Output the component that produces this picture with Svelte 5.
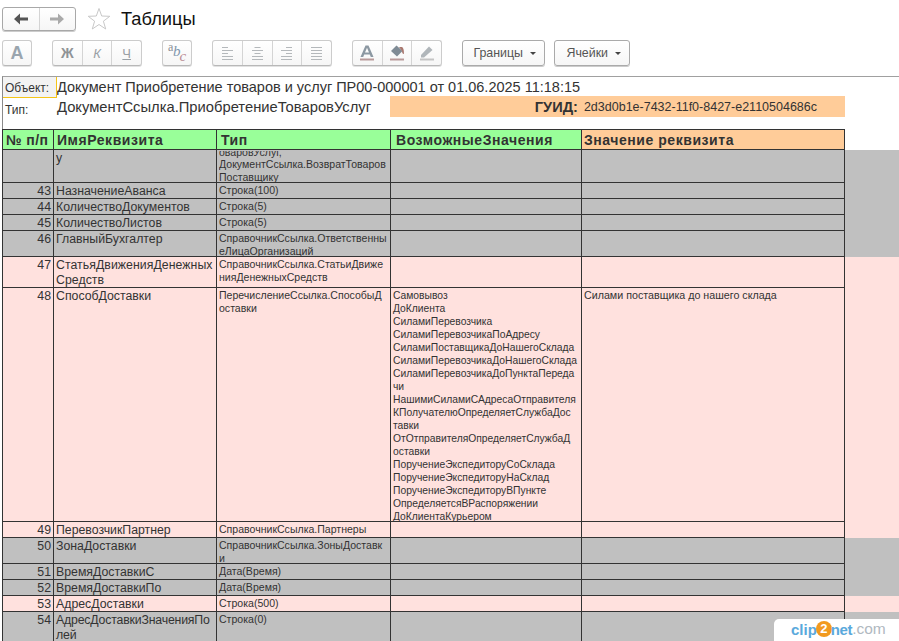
<script>
  const rows = [
    { n: '', name: ['у'], type: ['оваровУслуг,', 'ДокументСсылка.ВозвратТоваров', 'Поставщику'], c: 'gray first' },
    { n: 43, name: ['НазначениеАванса'], type: ['Строка(100)'], c: 'gray' },
    { n: 44, name: ['КоличествоДокументов'], type: ['Строка(5)'], c: 'gray' },
    { n: 45, name: ['КоличествоЛистов'], type: ['Строка(5)'], c: 'gray' },
    { n: 46, name: ['ГлавныйБухгалтер'], type: ['СправочникСсылка.Ответственны', 'еЛицаОрганизаций'], c: 'gray' },
    { n: 47, name: ['СтатьяДвиженияДенежных', 'Средств'], type: ['СправочникСсылка.СтатьиДвиже', 'нияДенежныхСредств'], c: 'pink wide' },
    { n: 48, name: ['СпособДоставки'], type: ['ПеречислениеСсылка.СпособыД', 'оставки'], c: 'pink',
      vals: ['Самовывоз', 'ДоКлиента', 'СиламиПеревозчика', 'СиламиПеревозчикаПоАдресу', 'СиламиПоставщикаДоНашегоСклада', 'СиламиПеревозчикаДоНашегоСклада', 'СиламиПеревозчикаДоПунктаПереда', 'чи', 'НашимиСиламиСАдресаОтправителя', 'КПолучателюОпределяетСлужбаДос', 'тавки', 'ОтОтправителяОпределяетСлужбаД', 'оставки', 'ПоручениеЭкспедиторуСоСклада', 'ПоручениеЭкспедиторуНаСклад', 'ПоручениеЭкспедиторуВПункте', 'ОпределяетсяВРаспоряжении', 'ДоКлиентаКурьером'],
      value: 'Силами поставщика до нашего склада' },
    { n: 49, name: ['ПеревозчикПартнер'], type: ['СправочникСсылка.Партнеры'], c: 'pink' },
    { n: 50, name: ['ЗонаДоставки'], type: ['СправочникСсылка.ЗоныДоставк', 'и'], c: 'gray' },
    { n: 51, name: ['ВремяДоставкиС'], type: ['Дата(Время)'], c: 'gray' },
    { n: 52, name: ['ВремяДоставкиПо'], type: ['Дата(Время)'], c: 'gray' },
    { n: 53, name: ['АдресДоставки'], type: ['Строка(500)'], c: 'pink' },
    { n: 54, name: ['АдресДоставкиЗначенияПо', 'лей'], type: ['Строка(0)'], c: 'gray tight' }
  ];
  const aligns = [
    ['M0 .5H6', 'M0 3.5H11', 'M0 6.5H6', 'M0 9.5H11', 'M0 12.5H11'],
    ['M2.5 .5H8.5', 'M0 3.5H11', 'M2.5 6.5H8.5', 'M0 9.5H11', 'M0 12.5H11'],
    ['M5 .5H11', 'M0 3.5H11', 'M5 6.5H11', 'M0 9.5H11', 'M0 12.5H11'],
    ['M0 .5H11', 'M0 3.5H11', 'M0 6.5H11', 'M0 9.5H11', 'M0 12.5H11']
  ];
</script>

<div class="page">
  <header class="top">
    <div class="group nav">
      <button class="btn"><svg width="14" height="12" viewBox="0 0 14 12"><path d="M6 .5 L0 6 L6 11.5 V7.5 H14 V4.5 H6 Z" fill="#555"/></svg></button>
      <button class="btn"><svg width="14" height="12" viewBox="0 0 14 12"><path d="M8 .5 L14 6 L8 11.5 V7.5 H0 V4.5 H8 Z" fill="#aaa"/></svg></button>
    </div>
    <svg class="star" width="24" height="24" viewBox="0 0 24 24"><path d="M12 1.5 L14.7 9 L22.8 9.3 L16.4 14.2 L18.7 22 L12 17.5 L5.3 22 L7.6 14.2 L1.2 9.3 L9.3 9 Z" fill="#fff" stroke="#c8c8c8"/></svg>
    <h1>Таблицы</h1>
  </header>

  <div class="toolbar">
    <div class="group w1"><button class="btn"><span class="a">A</span></button></div>
    <div class="group w3">
      <button class="btn"><span class="gl zh">Ж</span></button>
      <button class="btn"><span class="gl k">К</span></button>
      <button class="btn"><span class="gl ch">Ч</span></button>
    </div>
    <div class="group w1">
      <button class="btn">
        <svg width="20" height="20" viewBox="0 0 20 20">
          <text x="1" y="8" class="abc" fill="#8a8f94">a</text>
          <text x="6" y="13" class="abc big" fill="#7f97ad">b</text>
          <text x="12.5" y="18" class="abc big" fill="#b98d94">c</text>
        </svg>
      </button>
    </div>
    <div class="group w4">
      {#each aligns as a}
        <button class="btn">
          <svg width="11" height="13" viewBox="0 0 11 13" stroke="#b4b8bb" fill="none">
            {#each a as d}<path {d} />{/each}
          </svg>
        </button>
      {/each}
    </div>
    <div class="group w3">
      <button class="btn"><svg width="18" height="18" viewBox="0 0 18 18"><path d="M2.5 13 L7.5 1.5 H10.5 L15.5 13 H12.8 L11.8 10.5 H6.2 L5.2 13 Z M7 8.5 H11 L9 3.8 Z" fill="#8c98a2" fill-rule="evenodd"/><path d="M2 15.5H16" stroke="#b89a9a" stroke-width="2"/></svg></button>
      <button class="btn">
        <svg width="18" height="18" viewBox="0 0 18 18"><path d="M8.5 1.5 L14.5 7 L9 12.5 L3 7 Z" fill="#7f8b95"/><path d="M11 3 h3 q2 1 2 7 q-2 0 -2-3 Z" fill="#a9786f"/><path d="M2 15.5H16" stroke="#b89a9a" stroke-width="2"/></svg>
      </button>
      <button class="btn">
        <svg width="18" height="18" viewBox="0 0 18 18"><path d="M3 11 L11 2.5 L14.5 6 L6 13.5 H3 Z" fill="#b0b6ba"/><path d="M2 15.5H16" stroke="#c4c4c4" stroke-width="2"/></svg>
      </button>
    </div>
    <button class="drop borders">Границы<i></i></button>
    <button class="drop cells">Ячейки<i></i></button>
  </div>

  <section class="info">
    <div class="info-row one">
      <div class="lab active">Объект:</div>
      <div class="val">Документ Приобретение товаров и услуг ПР00-000001 от 01.06.2025 11:18:15</div>
    </div>
    <div class="info-row two">
      <div class="lab">Тип:</div>
      <div class="val short">ДокументСсылка.ПриобретениеТоваровУслуг</div>
      <div class="guid"><b>ГУИД:</b><span>2d3d0b1e-7432-11f0-8427-e2110504686c</span></div>
    </div>
  </section>

  <table>
    <colgroup>
      <col class="c1"/><col class="c2"/><col class="c3"/><col class="c4"/><col class="c5"/><col class="c6"/>
    </colgroup>
    <thead>
      <tr>
        <th class="g h1">№ п/п</th><th class="g h2">ИмяРеквизита</th><th class="g h3">Тип</th><th class="g h4">ВозможныеЗначения</th><th class="o">Значение реквизита</th><th class="blank"></th>
      </tr>
    </thead>
    <tbody>
      {#each rows as r}
        <tr class={r.c}>
          <td class="num"><div>{r.n}</div></td>
          <td class="name">{#each r.name as l}<div>{l}</div>{/each}</td>
          <td class="small type"><div class="clip">{#each r.type as l}<div>{l}</div>{/each}</div></td>
          <td class="small vals">{#each r.vals ?? [] as l}<div>{l}</div>{/each}</td>
          <td class="small value">{r.value ?? ''}</td>
          <td class="blank"></td>
        </tr>
      {/each}
    </tbody>
  </table>

  <div class="mark"><span class="bl">clip</span><span class="two-c">2</span><span class="bl net">net</span><span class="gr">.com</span></div>
</div>

<style>
  :global(body) { margin: 0; background: #fff; }
  .page { position: relative; width: 899px; height: 641px; overflow: hidden; font-family: "Liberation Sans", Arial, sans-serif; color: #333; }
  button { font: inherit; padding: 0; margin: 0; color: inherit; }
  .top { display: flex; align-items: center; padding: 6px 0 0 2px; height: 25px; }
  .star { margin-left: 11px; }
  h1 { margin: 0 0 0 10px; font-size: 18.3px; font-weight: 400; color: #111; line-height: 25px; }
  .group { display: flex; height: 26px; box-sizing: border-box; border: 1px solid #ccc; border-bottom-color: #b8b8b8; border-radius: 3px; background: linear-gradient(#fff, #f6f6f6); box-shadow: 0 1px 0 #e2e2e2; }
  .nav { width: 74px; height: 24px; border-color: #a8a8a8; box-shadow: 0 1px 0 #ccc; }
  .w1 { width: 30px; }
  .w3 { width: 90px; }
  .w4 { width: 120px; }
  .btn { flex: 1; min-width: 0; box-sizing: border-box; border: 0; border-left: 1px solid #d4d4d4; background: none; display: flex; align-items: center; justify-content: center; }
  .btn:first-child { border-left: 0; }
  .toolbar { display: flex; gap: 20px; padding: 9px 0 0 2px; height: 27px; align-items: flex-start; }
  .gl { color: #9aa0a5; font-size: 13px; line-height: 1; }
  .a { font-size: 18px; font-weight: 700; color: #9aa5ae; line-height: 1; }
  .zh { font-weight: 700; font-size: 14px; color: #8f9396; }
  .k { font-style: italic; font-size: 13px; }
  .ch { text-decoration: underline; font-size: 13px; }
  .abc { font-family: "Liberation Serif", serif; font-size: 12px; }
  .big { font-size: 15px; font-style: italic; }
  .drop { height: 26px; box-sizing: border-box; border: 1px solid #aaa; border-radius: 3px; background: linear-gradient(#fff, #f6f6f6); box-shadow: 0 1px 0 #ccc; font-size: 12.4px; color: #555; display: flex; align-items: center; justify-content: flex-end; padding: 0 8px 0 0; }
  .drop i { width: 0; height: 0; border: 3px solid transparent; border-top: 3px solid #444; border-bottom: 0; margin-left: 7px; }
  .borders { width: 83px; }
  .cells { width: 76px; margin-left: -11px; }
  .info { margin: 9px 0 0 2px; border-top: 1px solid #a0a0a0; border-left: 1px solid #8a8a8a; height: 52px; }
  .info-row { display: flex; align-items: flex-start; }
  .one { height: 19px; }
  .lab { width: 54px; font-size: 12px; line-height: 22px; padding-left: 2px; box-sizing: border-box; height: 21px; }
  .active { background: #f3f3f3; border-right: 1px solid #f5c518; border-bottom: 1px solid #f5c518; width: 54px; height: 21px; line-height: 23px; position: relative; z-index: 1; }
  .val { font-size: 14.5px; line-height: 21px; margin-left: 0; white-space: nowrap; }
  .two { height: 32px; }
  .two .lab { margin-top: 3px; }
  .short { width: 333px; margin-top: 1px; font-size: 14.75px; }
  .guid { width: 455px; height: 21px; background: #ffcc99; display: flex; justify-content: flex-end; align-items: center; gap: 6px; padding-right: 28px; box-sizing: border-box; }
  .guid b { font-size: 14.6px; }
  .guid span { font-size: 12.5px; }
  table { border-collapse: collapse; table-layout: fixed; width: 897px; margin-left: 2px; }
  .c1 { width: 51px; } .c2 { width: 163px; } .c3 { width: 174px; } .c4 { width: 191px; } .c5 { width: 263px; } .c6 { width: 55px; }
  th, td { border: 1px solid #333; padding: 0 0 0 2px; vertical-align: top; text-align: left; overflow: hidden; white-space: nowrap; }
  th { font-size: 14px; font-weight: 700; line-height: 18px; padding-top: 1px; letter-spacing: .55px; }
  .h1 { padding-left: 3px; letter-spacing: .4px; }
  .h2 { padding-left: 3px; }
  .h3 { padding-left: 4px; }
  .h4 { padding-left: 5px; }
  .g { background: #99ff99; }
  .o { background: #ffcc99; }
  th.blank, td.blank { border: 0; }
  .gray { background: #c0c0c0; }
  .pink { background: #ffe1de; }
  .num { font-size: 12.3px; line-height: 15px; text-align: right; padding: 1px 2px 0 0; }
  .name { font-size: 12.3px; line-height: 15px; padding-top: 1px; }
  .wide .name { letter-spacing: .05px; }
  .tight .name { letter-spacing: -.18px; }
  .num div:last-child, .name div:last-child { margin-bottom: -1px; }
  .small { line-height: 13px; padding-top: 1px; }
  .type { font-size: 10.55px; line-height: 12.5px; }
  .type .clip > div:last-child { margin-bottom: -1px; }
  .vals { font-size: 10.3px; line-height: 13px; padding-top: 1px; overflow: visible; }
  .vals div:last-child { margin-bottom: -2px; }
  .value { font-size: 10.7px; padding-top: 1px; line-height: 12px; }
  .first td { height: 31px; }
  .first .clip { height: 31px; display: flex; flex-direction: column; justify-content: flex-end; overflow: hidden; }
  .mark { position: absolute; right: 0; bottom: 0; width: 125px; height: 22px; background: #fff; border-top-left-radius: 5px; display: flex; align-items: center; padding: 0 0 2px 17px; box-sizing: border-box; font-size: 15px; font-weight: 700; }
  .bl { color: #5aa9dc; }
  .net { letter-spacing: -.4px; }
  .gr { color: #b0b8c0; font-weight: 400; font-size: 15.5px; }
  .two-c { width: 16px; height: 16px; margin: 0 -1px 0 -1px; border-radius: 50%; background: #f29a1f; color: #fff; font-size: 13px; line-height: 16px; text-align: center; }
</style>
